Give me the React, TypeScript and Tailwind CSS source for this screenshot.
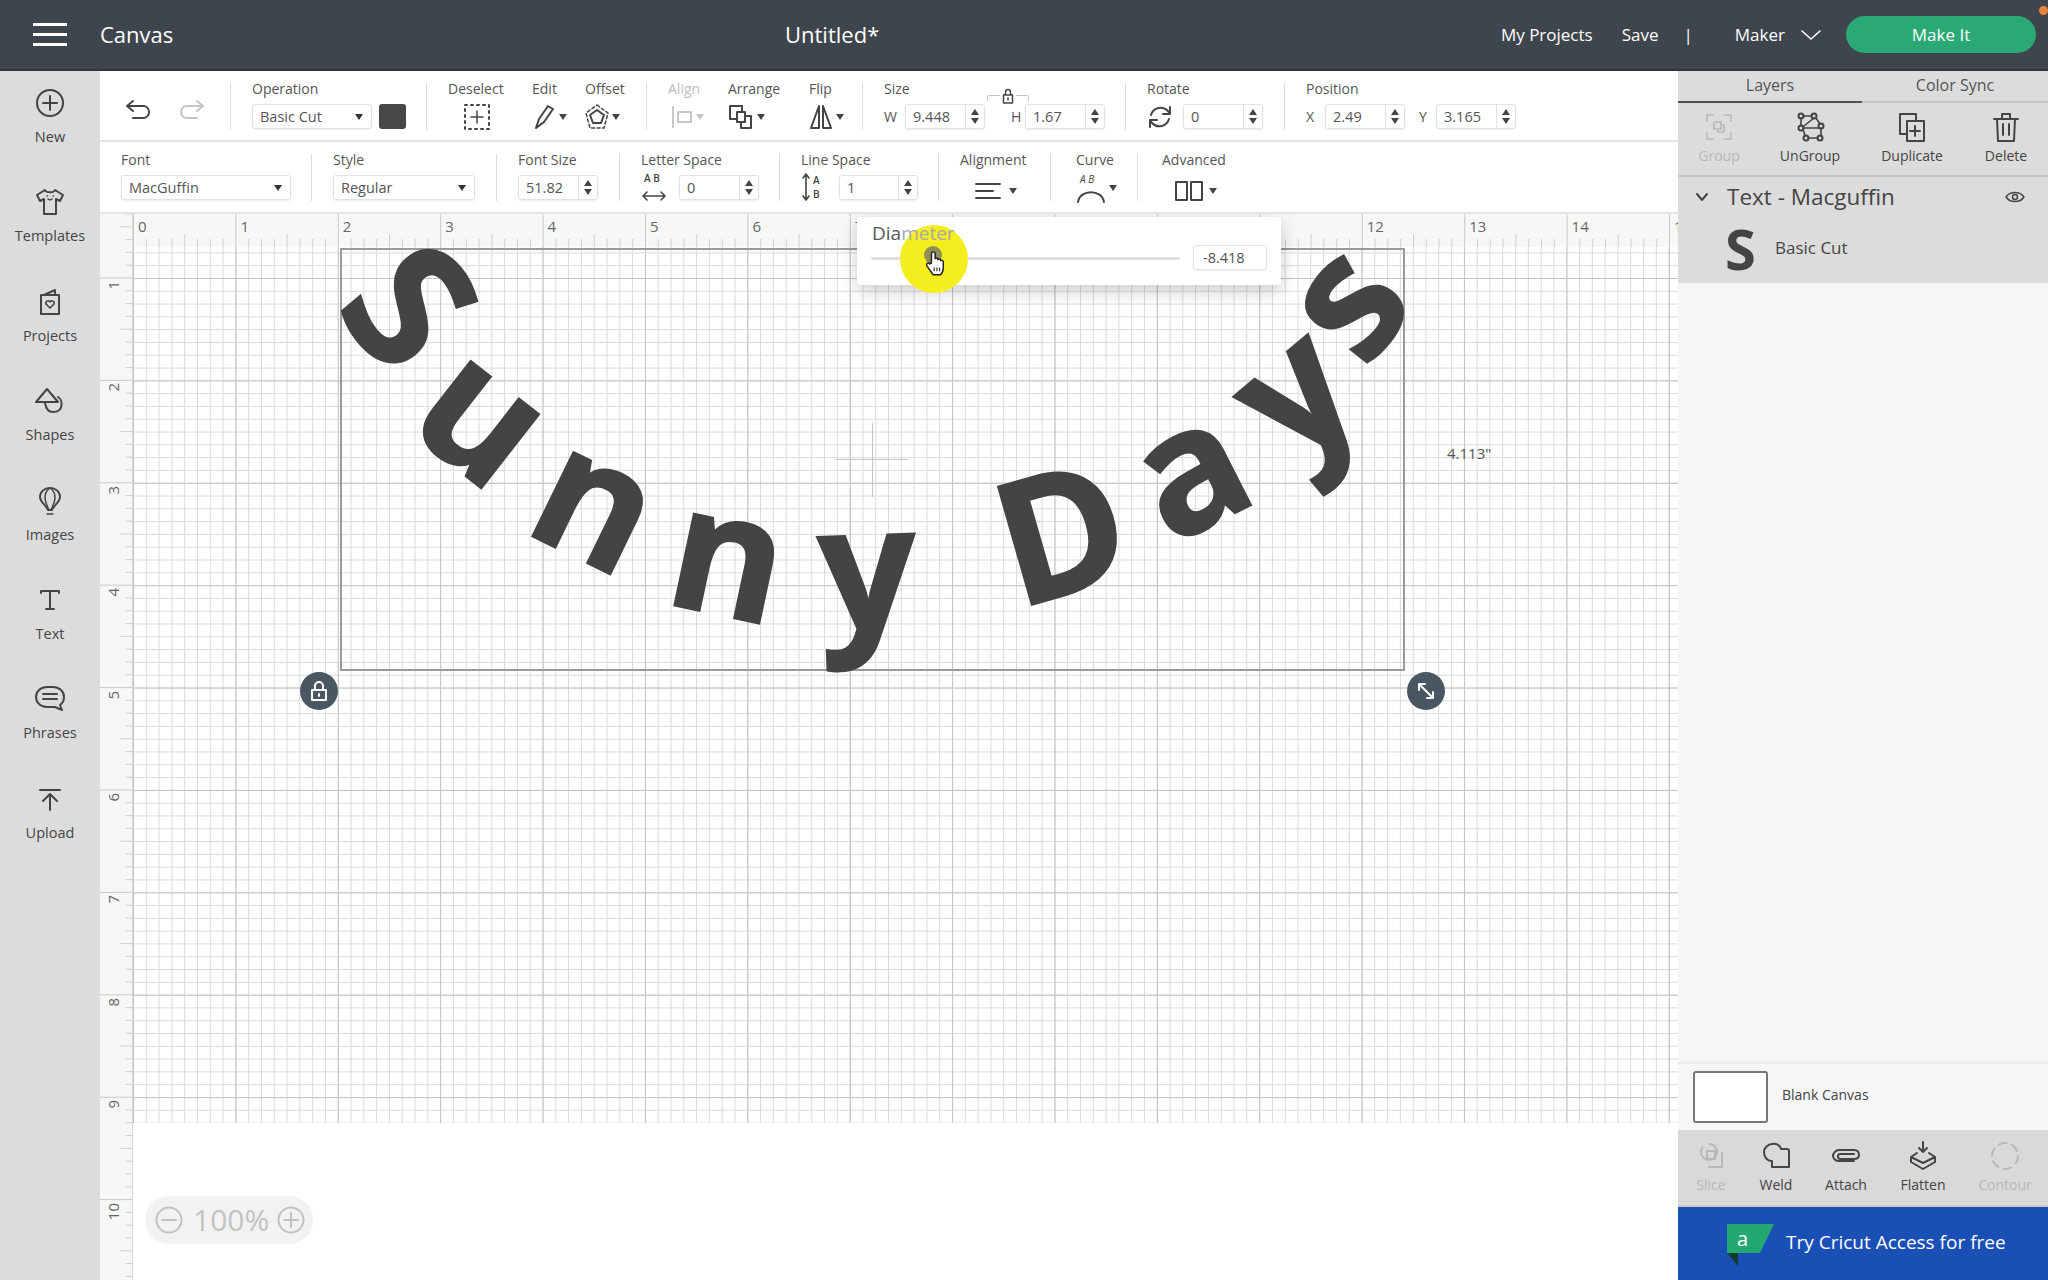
import type { ReactNode } from "react";

const inch = 102.4;
const tick = 12.8;

function Caret({ className = "" }: { className?: string }) {
  return (
    <svg viewBox="0 0 8 6" className={`h-[6px] w-[8px] ${className}`}>
      <path d="M0 0h8L4 6z" fill="currentColor" />
    </svg>
  );
}

function Icon({ w, h, children, className = "" }: { w: number; h: number; children: ReactNode; className?: string }) {
  return (
    <svg
      viewBox={`0 0 ${w} ${h}`}
      width={w}
      height={h}
      fill="none"
      stroke="currentColor"
      strokeWidth="2"
      strokeLinecap="round"
      strokeLinejoin="round"
      className={className}
    >
      {children}
    </svg>
  );
}

function Sep() {
  return <div className="ml-[20px] mr-[21px] mt-[12px] h-[47px] w-px shrink-0 bg-[#dcdcdc]" />;
}

function Group({ w, label, muted, children }: { w: number; label: string; muted?: boolean; children: ReactNode }) {
  return (
    <div className="relative shrink-0 pt-[9px]" style={{ width: w }}>
      <div className={`h-[18px] text-[14px] leading-[18px] ${muted ? "text-[#bdbdbd]" : "text-[#555]"}`}>{label}</div>
      <div className="mt-[6px] flex h-[25px] items-center">{children}</div>
    </div>
  );
}

function Spin({ w, value }: { w: number; value: string }) {
  return (
    <div
      className="flex h-[25px] shrink-0 items-center rounded-[3px] border border-[#e2e2e2] text-[14.5px] text-[#555] shadow-[0_1px_2px_rgba(0,0,0,0.08)]"
      style={{ width: w }}
    >
      <span className="flex-1 pl-[7px]">{value}</span>
      <span className="flex h-full w-[19px] flex-col items-center justify-center gap-[3px] border-l border-[#e2e2e2] text-[#444]">
        <Caret className="rotate-180" />
        <Caret />
      </span>
    </div>
  );
}

function Select({ w, value }: { w: number; value: string }) {
  return (
    <div
      className="flex h-[25px] shrink-0 items-center justify-between rounded-[3px] border border-[#e2e2e2] pl-[7px] pr-[8px] text-[14.5px] text-[#555] shadow-[0_1px_2px_rgba(0,0,0,0.08)]"
      style={{ width: w }}
    >
      {value}
      <Caret className="text-[#333]" />
    </div>
  );
}

const railItems: { label: string; icon: ReactNode }[] = [
  {
    label: "New",
    icon: (
      <Icon w={32} h={32}>
        <circle cx="16" cy="16" r="13" />
        <path d="M16 9v14M9 16h14" />
      </Icon>
    ),
  },
  {
    label: "Templates",
    icon: (
      <Icon w={32} h={32}>
        <path d="M11 4 3 9l3 6 4-2v15h12V13l4 2 3-6-8-5c-1 3-9 3-10 0z" />
        <path d="M13 10h.5M19 10h.5M14 13c1 1 3 1 4 0" strokeWidth="1.5" />
      </Icon>
    ),
  },
  {
    label: "Projects",
    icon: (
      <Icon w={32} h={32}>
        <path d="M7 9h18v19H7zM10 9l11-5v5" />
        <path d="M16 22l-4-4c-1-3 3-4 4-2 1-2 5-1 4 2z" strokeWidth="1.6" />
      </Icon>
    ),
  },
  {
    label: "Shapes",
    icon: (
      <Icon w={32} h={32}>
        <path d="M13 4 2 17h22z" />
        <path d="M24 12c5 3 6 15-5 15-4 0-7-3-8-9" />
      </Icon>
    ),
  },
  {
    label: "Images",
    icon: (
      <Icon w={32} h={32}>
        <path d="M16 3C10 3 6 7 6 12c0 5 6 8 8 13h4c2-5 8-8 8-13 0-5-4-9-10-9z" />
        <path d="M16 3c-3 2-5 6-5 9s2 9 4 13M16 3c3 2 5 6 5 9s-2 9-4 13M13 29h6" strokeWidth="1.5" />
      </Icon>
    ),
  },
  {
    label: "Text",
    icon: (
      <Icon w={32} h={32}>
        <path d="M7 9V7h18v2M16 7v18M12 25h8" />
      </Icon>
    ),
  },
  {
    label: "Phrases",
    icon: (
      <Icon w={32} h={32}>
        <path d="M13 4h6c6 0 11 4 11 10 0 3-1 6-4 8l2 5-7-3h-8C6 24 2 19 2 14 2 8 7 4 13 4z" />
        <path d="M9 11h14M9 16h14" />
      </Icon>
    ),
  },
  {
    label: "Upload",
    icon: (
      <Icon w={32} h={32}>
        <path d="M6 7h20M16 27V12M9 18l7-7 7 7" />
      </Icon>
    ),
  },
];

const letters = [
  { ch: "S", cls: "left-[25px] top-[-34px] rotate-[50deg]" },
  { ch: "u", cls: "left-[90px] top-[73px] rotate-[38deg]" },
  { ch: "n", cls: "left-[202px] top-[159px] rotate-[26deg]" },
  { ch: "n", cls: "left-[332px] top-[213px] rotate-[12deg]" },
  { ch: "y", cls: "left-[476px] top-[226px] rotate-[-2deg]" },
  { ch: "D", cls: "left-[654px] top-[191px] rotate-[-16deg]" },
  { ch: "a", cls: "left-[792px] top-[127px] rotate-[-27deg]" },
  { ch: "y", cls: "left-[897px] top-[50px] rotate-[-40deg]" },
  { ch: "s", cls: "left-[954px] top-[-40px] rotate-[-52deg]" },
];

function VRuler() {
  const marks = Array.from({ length: 90 }, (_, k) => k - 5);
  return (
    <div className="relative h-full w-[33px] shrink-0 overflow-hidden bg-[#f7f7f7]">
      <svg width="33" height="1066" className="absolute left-0 top-0">
        {marks.map((i) => {
          const m = ((i % 8) + 8) % 8;
          const len = m === 0 ? 33 : m === 4 ? 13 : 8;
          const y = 64 + i * tick;
          return <line key={i} x1={33 - len} x2={33} y1={y} y2={y} stroke={m === 0 ? "#c8c8c8" : "#cfcfcf"} />;
        })}
        <line x1="32.5" x2="32.5" y1="0" y2="1066" stroke="#d8d8d8" />
      </svg>
      {Array.from({ length: 10 }, (_, k) => k + 1).map((n) => (
        <span
          key={n}
          className="absolute left-[4px] rotate-180 text-[15px] leading-[18px] text-[#666] [writing-mode:vertical-rl]"
          style={{ top: 64 + (n - 1) * inch + 3 }}
        >
          {n}
        </span>
      ))}
    </div>
  );
}

function HRuler() {
  const marks = Array.from({ length: 122 }, (_, k) => k);
  return (
    <div className="relative h-[33px] overflow-hidden bg-[#f7f7f7]">
      <svg width="1545" height="33" className="absolute left-0 top-0">
        {marks.map((i) => {
          const m = i % 8;
          const len = m === 0 ? 33 : m === 4 ? 13 : 8;
          const x = i * tick;
          return <line key={i} x1={x + 0.5} x2={x + 0.5} y1={33 - len} y2={33} stroke={m === 0 ? "#c8c8c8" : "#cfcfcf"} />;
        })}
      </svg>
      {Array.from({ length: 16 }, (_, k) => k).map((n) => (
        <span key={n} className="absolute top-[3px] text-[15px] leading-[18px] text-[#666]" style={{ left: n * inch + 5 }}>
          {n}
        </span>
      ))}
    </div>
  );
}

function Toolbar() {
  return (
    <>
      <div className="flex h-[71px] border-b-2 border-[#e4e4e4] bg-white">
        <div className="flex w-[110px] shrink-0 gap-[26px] pl-[24px] pt-[27px]">
          <Icon w={28} h={24} className="text-[#444]">
            <path d="M9 3 3 8l6 5M3 8h16c4 0 6 3 6 6s-2 6-6 6H9" />
          </Icon>
          <Icon w={28} h={24} className="text-[#c4c4c4]">
            <path d="M19 3l6 5-6 5M25 8H9c-4 0-6 3-6 6s2 6 6 6h10" />
          </Icon>
        </div>
        <Sep />
        <Group w={154} label="Operation">
          <Select w={120} value="Basic Cut" />
          <div className="ml-[7px] h-[25px] w-[27px] rounded-[3px] bg-[#474747]" />
        </Group>
        <Sep />
        <Group w={84} label="Deselect">
          <Icon w={26} h={26} className="ml-[16px] text-[#444]">
            <path d="M1 1h24v24H1z" strokeDasharray="2 4" />
            <path d="M13 7v12M7 13h12" strokeWidth="1.5" />
          </Icon>
        </Group>
        <Group w={53} label="Edit">
          <Icon w={22} h={26} className="text-[#444]">
            <path d="M4 24l3-9L16 2l5 3-9 13z" />
            <path d="M4 24l8-6" strokeWidth="1.5" />
          </Icon>
          <Caret className="ml-[5px] text-[#444]" />
        </Group>
        <Group w={41} label="Offset">
          <Icon w={24} h={26} className="text-[#444]">
            <path d="M12 6 19 11l-3 8H8l-3-8z" />
            <path d="M12 1 23 9l-4 15H5L1 9z" strokeDasharray="3 2.5" strokeWidth="1.5" />
          </Icon>
          <Caret className="ml-[3px] text-[#444]" />
        </Group>
        <Sep />
        <Group w={60} label="Align" muted>
          <Icon w={22} h={22} className="ml-[3px] text-[#c8c8c8]">
            <path d="M2 1v20M7 6h13v10H7z" />
          </Icon>
          <Caret className="ml-[3px] text-[#c8c8c8]" />
        </Group>
        <Group w={81} label="Arrange">
          <Icon w={26} h={26} className="text-[#444]">
            <path d="M9 15H2V2h12v6M9 8h8v10H9zM17 12h6v12H13v-6" />
          </Icon>
          <Caret className="ml-[3px] text-[#444]" />
        </Group>
        <Group w={33} label="Flip">
          <Icon w={24} h={26} className="shrink-0 text-[#444]">
            <path d="M10 2v22H2zM14 2v22h8z" />
          </Icon>
          <Caret className="ml-[3px] shrink-0 text-[#444]" />
        </Group>
        <Sep />
        <Group w={221} label="Size">
          <span className="w-[21px] text-[14px] text-[#555]">W</span>
          <Spin w={80} value="9.448" />
          <span className="ml-[26px] w-[14px] text-[14px] text-[#555]">H</span>
          <Spin w={80} value="1.67" />
          <div className="absolute left-[103px] top-[24px] h-[6px] w-[42px] rounded-t-[2px] border-x border-t border-[#c4c4c4]" />
          <div className="absolute left-[116px] top-[17px] flex h-[17px] w-[16px] items-start justify-center bg-white text-[#444]">
            <Icon w={12} h={16}>
              <path d="M1.5 7h9v8h-9zM3.5 7V4a2.500 2.500 0 0 1 5 0v3M6 10v2" strokeWidth="1.5" />
            </Icon>
          </div>
        </Group>
        <Sep />
        <Group w={117} label="Rotate">
          <Icon w={26} h={26} className="mr-[10px] shrink-0 text-[#444]">
            <path d="M4 11a10 10 0 0 1 17-4l2 3M23 3v7h-7M22 15a10 10 0 0 1-17 4l-2-3M3 23v-7h7" />
          </Icon>
          <Spin w={80} value="0" />
        </Group>
        <Sep />
        <Group w={210} label="Position">
          <span className="w-[19px] text-[14px] text-[#555]">X</span>
          <Spin w={80} value="2.49" />
          <span className="ml-[14px] w-[17px] text-[14px] text-[#555]">Y</span>
          <Spin w={80} value="3.165" />
        </Group>
      </div>
      <div className="flex h-[72px] border-b-2 border-[#e4e4e4] bg-white pl-[21px]">
        <Group w={170} label="Font">
          <Select w={170} value="MacGuffin" />
        </Group>
        <Sep />
        <Group w={143} label="Style">
          <Select w={142} value="Regular" />
        </Group>
        <Sep />
        <Group w={81} label="Font Size">
          <Spin w={80} value="51.82" />
        </Group>
        <Sep />
        <Group w={118} label="Letter Space">
          <div className="relative mr-[11px] h-[28px] w-[27px] shrink-0">
            <span className="absolute left-[3px] top-[-3px] text-[10px] font-semibold leading-[14px] text-[#444]">A B</span>
            <Icon w={26} h={14} className="absolute bottom-[-1px] left-0 text-[#444]">
              <path d="M2 7h22M6 3 2 7l4 4M20 3l4 4-4 4" strokeWidth="1.6" />
            </Icon>
          </div>
          <Spin w={80} value="0" />
        </Group>
        <Sep />
        <Group w={117} label="Line Space">
          <div className="relative mr-[14px] h-[30px] w-[24px] shrink-0">
            <Icon w={10} h={30} className="absolute left-0 top-[-1px] text-[#444]">
              <path d="M5 2v26M2 6l3-4 3 4M2 24l3 4 3-4" strokeWidth="1.6" />
            </Icon>
            <span className="absolute left-[12px] top-[0px] text-[10px] font-semibold leading-[14px] text-[#444]">A</span>
            <span className="absolute left-[12px] top-[14px] text-[10px] font-semibold leading-[14px] text-[#444]">B</span>
          </div>
          <Spin w={79} value="1" />
        </Group>
        <Sep />
        <Group w={70} label="Alignment">
          <Icon w={28} h={20} className="ml-[14px] mt-[6px] shrink-0 text-[#444]">
            <path d="M2 3h24M2 10h17M2 17h24" />
          </Icon>
          <Caret className="ml-[7px] mt-[6px] shrink-0 text-[#444]" />
        </Group>
        <Sep />
        <div className="w-[45px] shrink-0 pl-[4px]">
          <Group w={41} label="Curve">
            <div className="relative h-[26px] w-[30px] shrink-0">
              <span className="absolute left-[4px] top-[-3px] text-[10px] italic leading-[14px] text-[#444]">A B</span>
              <Icon w={30} h={16} className="absolute bottom-[-2px] left-0 text-[#444]">
                <path d="M2 15c2-13 24-13 26 0" />
              </Icon>
            </div>
            <Caret className="ml-[3px] shrink-0 text-[#444]" />
          </Group>
        </div>
        <Sep />
        <div className="pl-[3px]">
          <Group w={82} label="Advanced">
            <Icon w={30} h={22} className="ml-[12px] mt-[6px] shrink-0 text-[#444]">
              <path d="M2 2h11v18H2zM17 2h11v18H17z" />
            </Icon>
            <Caret className="ml-[5px] mt-[6px] shrink-0 text-[#444]" />
          </Group>
        </div>
      </div>
    </>
  );
}

function Canvas() {
  return (
    <div className="relative flex min-h-0 flex-1 overflow-hidden bg-white">
      <VRuler />
      <div className="min-w-0 flex-1">
        <HRuler />
        <div className="relative h-[876px] bg-[linear-gradient(to_right,#c4c4c4_1px,transparent_1px),linear-gradient(to_bottom,#c4c4c4_1px,transparent_1px),linear-gradient(to_right,#dadada_1px,transparent_1px),linear-gradient(to_bottom,#dadada_1px,transparent_1px)] bg-[size:102.4px_102.4px,102.4px_102.4px,12.8px_12.8px,12.8px_12.8px] bg-[position:0_31px,0_31px,0_5.4px,0_5.4px]">
          <div className="absolute left-[207px] top-[1px] h-[423px] w-[1065px] border-2 border-[#9a9a9a]">
            <div className="absolute left-[494px] top-[209px] h-px w-[72px] bg-[#c4c4c4]" />
            <div className="absolute left-[530px] top-[173px] h-[74px] w-px bg-[#c4c4c4]" />
            {letters.map((l, i) => (
              <span
                key={i}
                className={`absolute font-['Open_Sans',sans-serif] text-[172px] font-bold leading-[172px] text-[#444] [-webkit-text-stroke:2px_#444] ${l.cls}`}
              >
                {l.ch}
              </span>
            ))}
          </div>
          <div className="absolute left-[167px] top-[425px] flex h-[38px] w-[38px] items-center justify-center rounded-full bg-[#4a5763] text-white">
            <Icon w={20} h={22}>
              <path d="M3 10h14v10H3zM6 10V6a4 4 0 0 1 8 0v4M10 14v2" />
            </Icon>
          </div>
          <div className="absolute left-[1274px] top-[425px] flex h-[38px] w-[38px] items-center justify-center rounded-full bg-[#4a5763] text-white">
            <Icon w={20} h={20}>
              <path d="M3 3l14 14M3 9V3h6M17 11v6h-6" />
            </Icon>
          </div>
          <span className="absolute left-[1314px] top-[195px] text-[15px] text-[#555]">4.113"</span>
        </div>
      </div>

      <div className="absolute left-[757px] top-[3px] h-[68px] w-[424px] rounded-[3px] bg-white shadow-[0_6px_18px_rgba(0,0,0,0.2)]">
        <div className="absolute left-[43px] top-[8px] h-[68px] w-[68px] rounded-full bg-[#f5ee1e]" />
        <div className="absolute left-[15px] top-[3px] text-[19px] leading-[26px] text-[#a8a8a8]">
          <span className="text-[#555]">Dia</span>meter
        </div>
        <div className="absolute left-[14px] top-[40px] h-[3px] w-[30px] rounded-full bg-[#dedede]" />
        <div className="absolute left-[110px] top-[40px] h-[3px] w-[213px] rounded-full bg-[#dedede]" />
        <div className="absolute left-[336px] top-[28px] flex h-[25px] w-[74px] items-center rounded-[3px] border border-[#e2e2e2] pl-[9px] text-[14.5px] text-[#555] shadow-[0_1px_2px_rgba(0,0,0,0.08)]">
          -8.418
        </div>
        <div className="absolute left-[67px] top-[29px] h-[18px] w-[18px] rounded-full bg-[#8f8e55]" />
        <svg viewBox="0 0 22 28" width="20" height="26" className="absolute left-[69px] top-[33px]">
          <path
            d="M6 14V4c0-3 4-3 4 0v6c0-2 3-2 3 0v1c0-2 3-2 3 0v1c0-2 3-1 3 1v6c0 4-2 7-3 8H8c-2-3-6-8-7-10-1-3 2-4 3-2z"
            fill="#fff"
            stroke="#222"
            strokeWidth="1.6"
          />
          <path d="M9 19v4M12 19v4M15 19v4" stroke="#222" strokeWidth="1.2" />
        </svg>
      </div>

      <div className="absolute left-[45px] top-[982px] flex h-[48px] w-[168px] items-center gap-[10px] rounded-full bg-[#f2f2f2] pl-[10px] text-[#c2c2c2]">
        <Icon w={28} h={28} className="shrink-0">
          <circle cx="14" cy="14" r="12.5" />
          <path d="M7 14h14" />
        </Icon>
        <span className="w-[74px] shrink-0 text-center text-[30px] leading-none">100%</span>
        <Icon w={28} h={28} className="shrink-0">
          <circle cx="14" cy="14" r="12.5" />
          <path d="M7 14h14M14 7v14" />
        </Icon>
      </div>
    </div>
  );
}

function PanelAction({ w, label, muted, children }: { w: number; label: string; muted?: boolean; children: ReactNode }) {
  return (
    <div className={`flex shrink-0 flex-col items-center ${muted ? "text-[#b8b8b8]" : "text-[#444]"}`} style={{ width: w }}>
      <div className="flex h-[32px] items-center">{children}</div>
      <span className="mt-[4px] text-[14px] leading-[18px]">{label}</span>
    </div>
  );
}

function RightPanel() {
  return (
    <div className="flex w-[370px] shrink-0 flex-col bg-[#f6f6f6]">
      <div className="bg-[#dcdcdc]">
        <div className="flex h-[32px] text-[16px] text-[#555]">
          <div className="flex w-[184px] items-center justify-center border-b-2 border-[#4b5157] pb-[3px]">Layers</div>
          <div className="flex w-[186px] items-center justify-center border-b-2 border-[#c4c4c4] pb-[3px]">Color Sync</div>
        </div>
        <div className="flex h-[74px] border-b-2 border-[#c4c4c4] pt-[8px]">
          <PanelAction w={82} label="Group" muted>
            <Icon w={28} h={28}>
              <path d="M2 8V2h6M20 2h6v6M26 20v6h-6M8 26H2v-6" strokeWidth="1.6" />
              <path d="M9 9h7v7H9zM13 16v3h6v-7h-3" strokeWidth="1.6" />
            </Icon>
          </PanelAction>
          <PanelAction w={100} label="UnGroup">
            <Icon w={30} h={30}>
              <circle cx="6" cy="4" r="2.5" />
              <circle cx="19" cy="4" r="2.5" />
              <circle cx="6" cy="16" r="2.5" />
              <circle cx="26" cy="14" r="2.5" />
              <circle cx="11" cy="26" r="2.5" />
              <circle cx="25" cy="26" r="2.5" />
              <path d="M8 4h9M6 6v8M19 6l-10 8M21 6l4 6M8 17l2 7M13 26h10M26 16v8M8 16h16" strokeWidth="1.6" />
            </Icon>
          </PanelAction>
          <PanelAction w={104} label="Duplicate">
            <Icon w={28} h={30}>
              <path d="M8 22H2V2h16v7M9 9h17v20H9zM17 14v10M12 19h10" />
            </Icon>
          </PanelAction>
          <PanelAction w={84} label="Delete">
            <Icon w={26} h={30}>
              <path d="M1 7h24M9 7V2h8v5M4 7l1 22h16l1-22M10 12v11M16 12v11" />
            </Icon>
          </PanelAction>
        </div>
        <div className="h-[106px]">
          <div className="flex h-[40px] items-center pl-[17px] text-[#444]">
            <Icon w={14} h={10}>
              <path d="M2 2l5 6 5-6" />
            </Icon>
            <span className="ml-[18px] flex-1 text-[22.5px] leading-none">Text - Macguffin</span>
            <Icon w={20} h={18} className="mr-[23px]">
              <path d="M1 9C5 3 15 3 19 9 15 15 5 15 1 9z" strokeWidth="1.5" />
              <circle cx="10" cy="9" r="2.500" strokeWidth="1.5" />
            </Icon>
          </div>
          <div className="flex h-[62px] items-center pl-[47px] text-[#444]">
            <span className="w-[50px] text-[56px] font-bold leading-none">S</span>
            <span className="text-[17px]">Basic Cut</span>
          </div>
        </div>
      </div>
      <div className="flex-1" />
      <div className="flex h-[68px] items-start border-t-2 border-[#ebebeb] pl-[15px] pt-[7px]">
        <div className="h-[52px] w-[75px] rounded-[3px] border-2 border-[#777] bg-white" />
        <span className="ml-[14px] mt-[15px] text-[14px] leading-[18px] text-[#444]">Blank Canvas</span>
      </div>
      <div className="flex h-[75px] bg-[#d9d9d9] pt-[10px]">
        <PanelAction w={66} label="Slice" muted>
          <Icon w={28} h={28}>
            <circle cx="12" cy="10" r="8" strokeDasharray="30 8" />
            <path d="M10 9h8v8h-8zM25 11v14H12" />
          </Icon>
        </PanelAction>
        <PanelAction w={64} label="Weld">
          <Icon w={28} h={28}>
            <path d="M10 2c4-1 8 1 9 5h6c1 0 2 1 2 2v16H10v-6c-5 0-8-4-8-9 0-4 4-8 8-8z" />
          </Icon>
        </PanelAction>
        <PanelAction w={76} label="Attach">
          <Icon w={30} h={18}>
            <path d="M23 14H8c-3 0-6-2-6-5s3-6 6-6h15c3 0 5 2 5 5s-2 4-5 4H9c-1 0-2-1-2-3s1-2 2-2h14" />
          </Icon>
        </PanelAction>
        <PanelAction w={78} label="Flatten">
          <Icon w={28} h={30}>
            <path d="M14 1v10M10 7l4 4 4-4M8 12l-6 4 12 6 12-6-6-4M2 21l12 7 12-7M2 16v5M26 16v5" />
          </Icon>
        </PanelAction>
        <PanelAction w={86} label="Contour" muted>
          <Icon w={30} h={30}>
            <circle cx="15" cy="15" r="13" strokeDasharray="8 5.6" />
          </Icon>
        </PanelAction>
      </div>
      <div className="flex h-[75px] items-start border-t-2 border-[#c9c9c9] bg-[#1a4fb5] pl-[49px] pt-[17px]">
        <svg viewBox="0 0 47 42" width="47" height="42" className="shrink-0">
          <path d="M0 29h11v13z" fill="#123d2c" />
          <path d="M0 0h47L33 29H0z" fill="#25a772" />
          <text x="10" y="22" fontSize="20" fill="#fff" fontFamily="Open Sans, sans-serif">
            a
          </text>
        </svg>
        <span className="ml-[12px] mt-[5px] text-[19px] leading-[26px] text-white">Try Cricut Access for free</span>
      </div>
    </div>
  );
}

export default function App() {
  return (
    <div className="flex h-[1280px] w-[2048px] flex-col overflow-hidden bg-white font-['Open_Sans',sans-serif]">
      <header className="relative flex h-[71px] shrink-0 items-center border-b-2 border-[#2f353a] bg-[#3e454c] text-white">
        <div className="ml-[33px] flex w-[34px] flex-col gap-[7px]">
          <div className="h-[3px] bg-white" />
          <div className="h-[3px] bg-white" />
          <div className="h-[3px] bg-white" />
        </div>
        <span className="ml-[33px] text-[22px]">Canvas</span>
        <span className="absolute left-[785px] text-[22px]">Untitled*</span>
        <div className="ml-auto flex items-center text-[17px]">
          <span>My Projects</span>
          <span className="ml-[29px]">Save</span>
          <span className="ml-[25px]">|</span>
          <span className="ml-[42px]">Maker</span>
          <Icon w={22} h={12} className="ml-[15px]">
            <path d="M2 2l9 8 9-8" strokeWidth="1.6" />
          </Icon>
          <div className="ml-[24px] mr-[12px] flex h-[37px] w-[190px] items-center justify-center rounded-full bg-[#2aa876]">Make It</div>
        </div>
        <div className="absolute left-[2039px] top-[6px] h-[9px] w-[9px] rounded-full bg-[#e8833a]" />
      </header>
      <div className="flex min-h-0 flex-1">
        <nav className="flex w-[100px] shrink-0 flex-col items-center bg-[#dcdcdc] pt-[16px] text-[#444]">
          {railItems.map((item) => (
            <div key={item.label} className="flex h-[99.4px] w-full shrink-0 flex-col items-center">
              {item.icon}
              <span className="mt-[9px] text-[14.5px] leading-[18px]">{item.label}</span>
            </div>
          ))}
        </nav>
        <main className="flex w-[1578px] shrink-0 flex-col">
          <Toolbar />
          <Canvas />
        </main>
        <RightPanel />
      </div>
    </div>
  );
}
